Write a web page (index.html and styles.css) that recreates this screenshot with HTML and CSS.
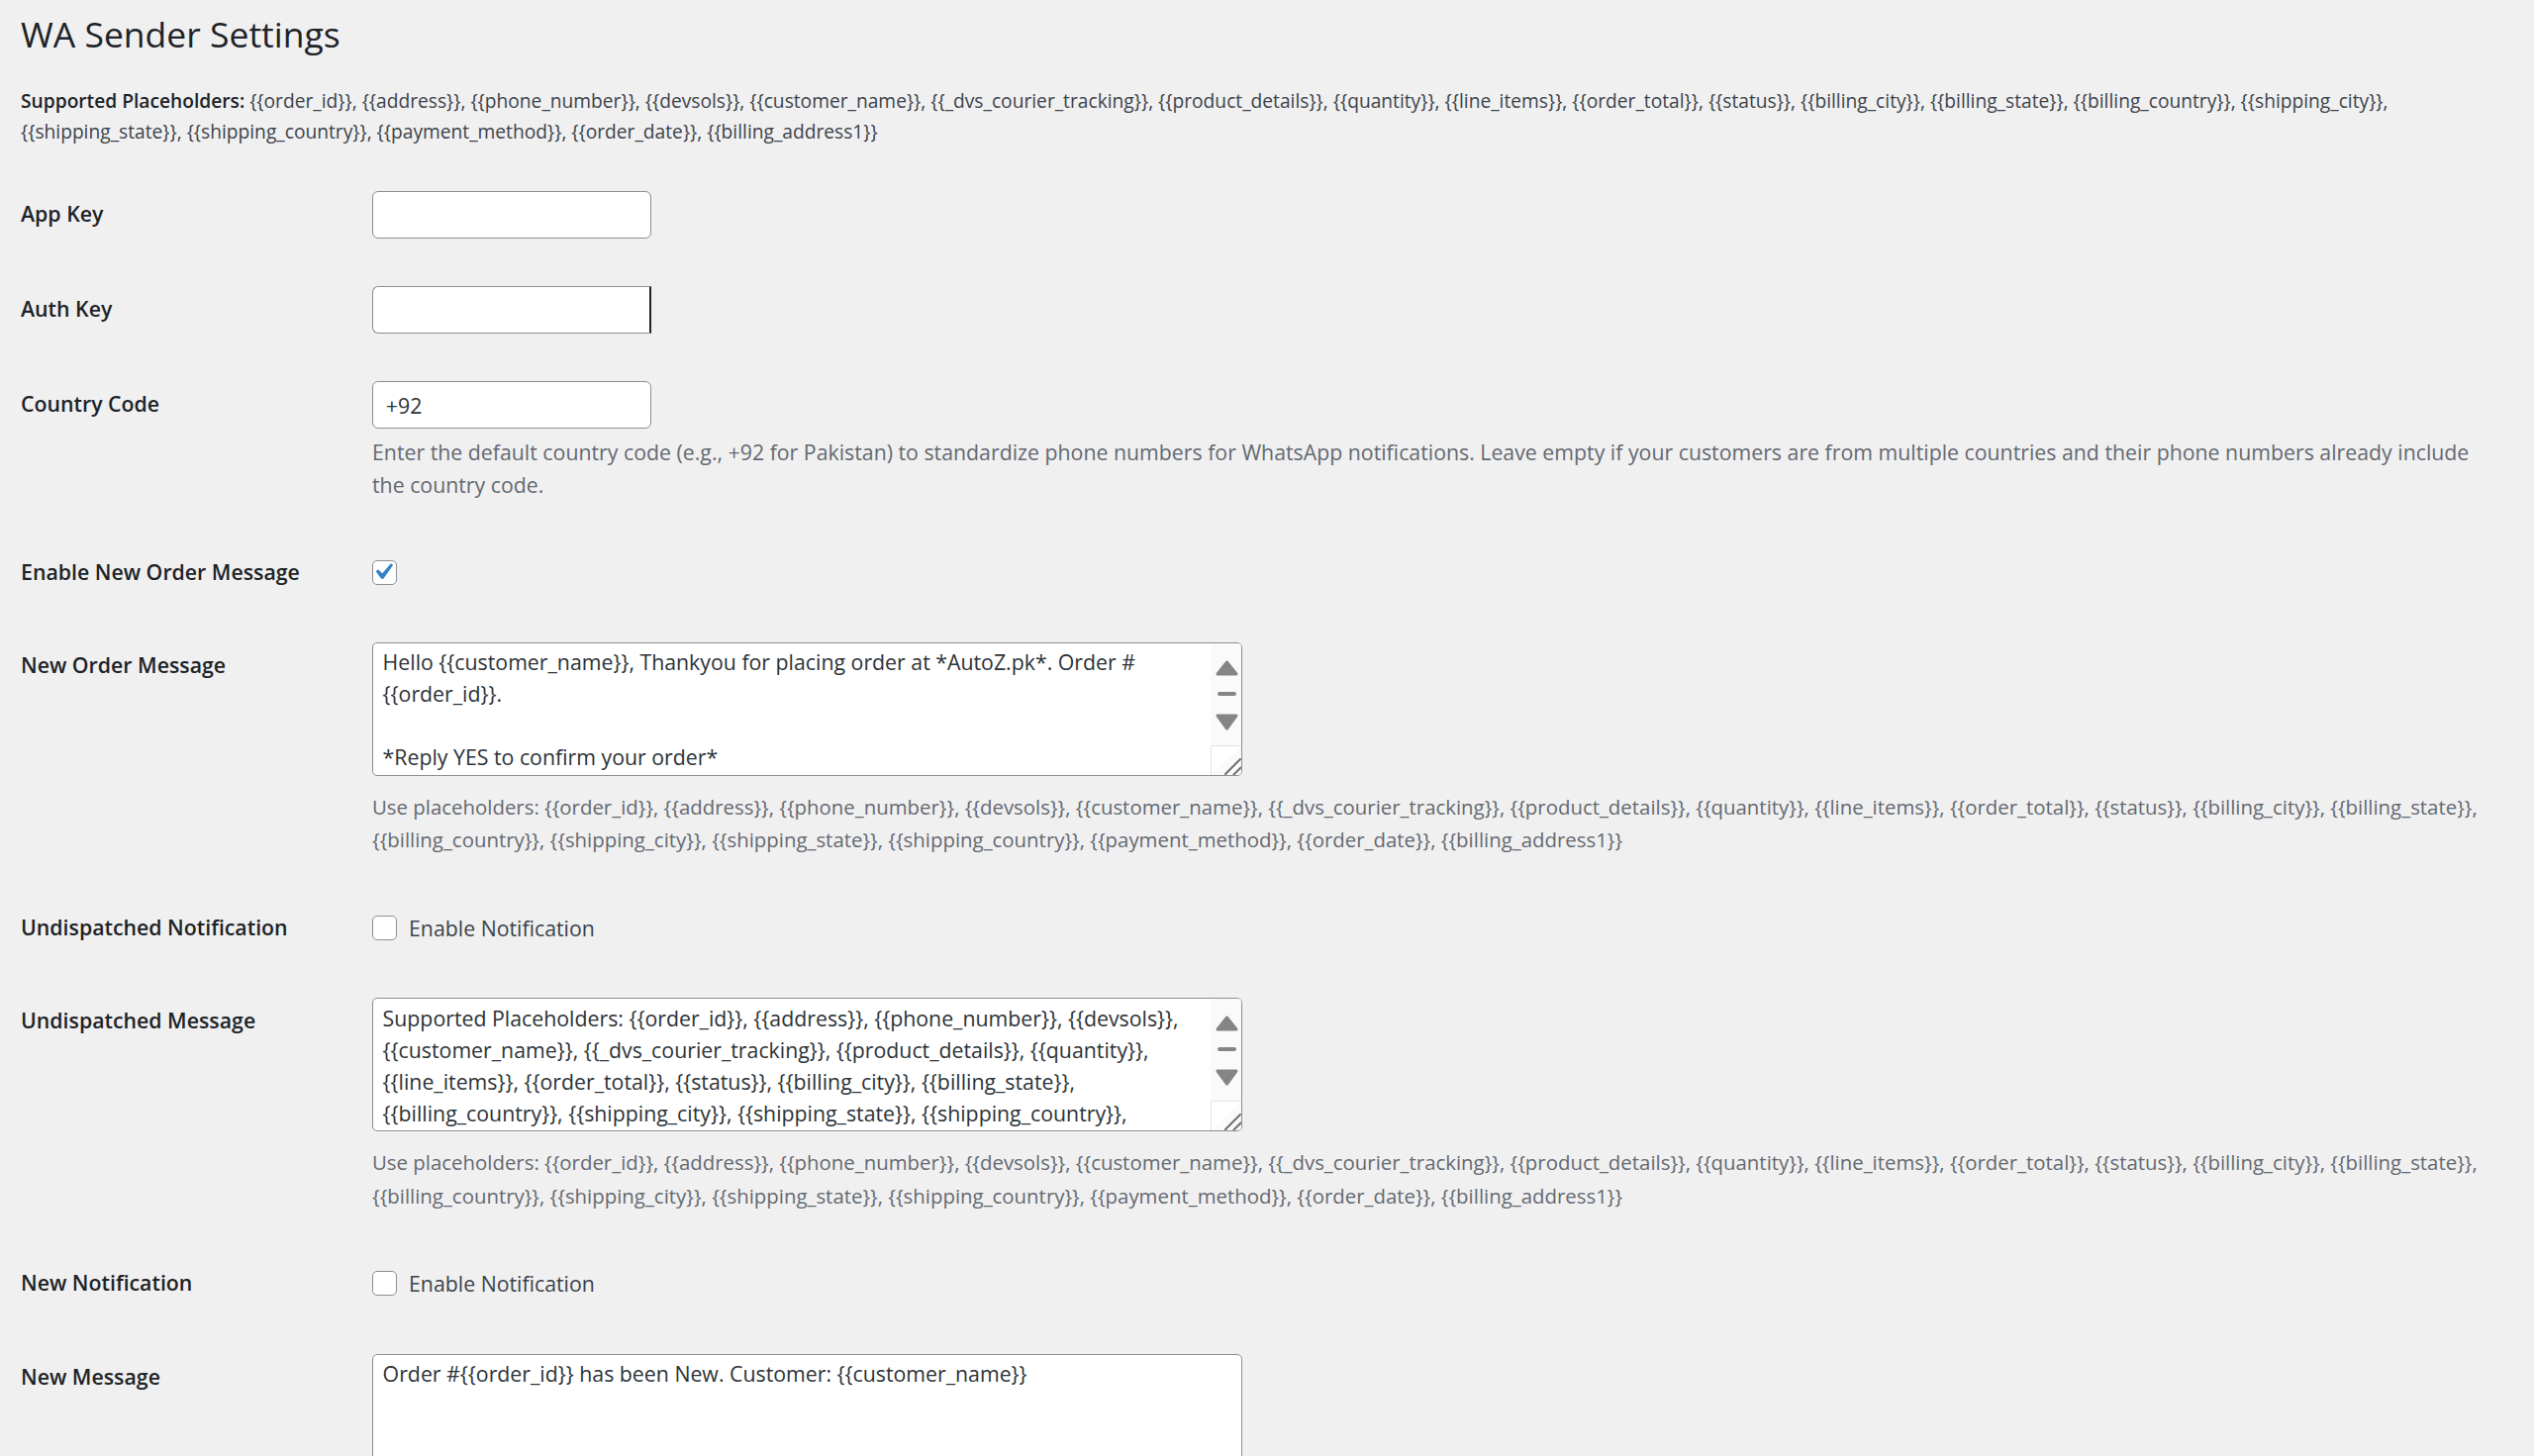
FILE: index.html
```html
<!DOCTYPE html>
<html lang="en">
<head>
    <meta charset="UTF-8">
    <title>WA Sender Settings</title>
    <link rel="stylesheet" href="styles.css">
</head>
<body>
<div class="wrap">
    <h1>WA Sender Settings</h1>
    <p class="placeholders"><strong>Supported Placeholders:</strong> {{order_id}}, {{address}}, {{phone_number}}, {{devsols}}, {{customer_name}}, {{_dvs_courier_tracking}}, {{product_details}}, {{quantity}}, {{line_items}}, {{order_total}}, {{status}}, {{billing_city}}, {{billing_state}}, {{billing_country}}, {{shipping_city}}, {{shipping_state}}, {{shipping_country}}, {{payment_method}}, {{order_date}}, {{billing_address1}}</p>

    <form method="post" action="options.php">
        <div class="form-table">
            <div class="form-row">
                <label class="row-title" for="app_key">App Key</label>
                <div class="row-field">
                    <input type="text" id="app_key" class="key-input">
                </div>
            </div>
            <div class="form-row">
                <label class="row-title" for="auth_key">Auth Key</label>
                <div class="row-field">
                    <input type="text" id="auth_key" class="key-input caret">
                </div>
            </div>
            <div class="form-row">
                <label class="row-title" for="country_code">Country Code</label>
                <div class="row-field">
                    <input type="text" id="country_code" class="key-input" value="+92">
                    <p class="description">Enter the default country code (e.g., +92 for Pakistan) to standardize phone numbers for WhatsApp notifications. Leave empty if your customers are from multiple countries and their phone numbers already include the country code.</p>
                </div>
            </div>
            <div class="form-row">
                <label class="row-title" for="new_order_enabled">Enable New Order Message</label>
                <div class="row-field">
                    <div class="check-field">
                        <span class="checkbox">
                            <input type="checkbox" id="new_order_enabled" checked>
                            <svg class="checkmark" viewBox="0 0 20 20"><path d="M14.83 4.89l1.34.94-5.81 8.38H9.02L5.78 9.67l1.34-1.25 2.57 2.4z"/></svg>
                        </span>
                    </div>
                </div>
            </div>
            <div class="form-row">
                <label class="row-title" for="new_order_message">New Order Message</label>
                <div class="row-field">
                    <div class="textarea-box">
                        <textarea id="new_order_message" rows="4">Hello {{customer_name}}, Thankyou for placing order at *AutoZ.pk*. Order # {{order_id}}.

*Reply YES to confirm your order*</textarea>
                        <div class="scrollbar">
                            <svg width="31" height="133" viewBox="0 0 31 133">
                                <path class="arrow" d="M16.5 19 L26 31 L7 31 Z"/>
                                <rect class="thumb" x="7" y="49" width="19" height="4" rx="2"/>
                                <path class="arrow" d="M7 73 L26 73 L16.5 86 Z"/>
                                <path class="corner" d="M0.5 133 V103.5 H31"/>
                                <path class="grip" d="M15 132 L30 117 M23.5 132.5 L30.5 125.5"/>
                            </svg>
                        </div>
                    </div>
                    <p class="description placeholder-list">Use placeholders: {{order_id}}, {{address}}, {{phone_number}}, {{devsols}}, {{customer_name}}, {{_dvs_courier_tracking}}, {{product_details}}, {{quantity}}, {{line_items}}, {{order_total}}, {{status}}, {{billing_city}}, {{billing_state}}, {{billing_country}}, {{shipping_city}}, {{shipping_state}}, {{shipping_country}}, {{payment_method}}, {{order_date}}, {{billing_address1}}</p>
                </div>
            </div>
            <div class="form-row">
                <span class="row-title">Undispatched Notification</span>
                <div class="row-field">
                    <label class="check-field">
                        <span class="checkbox"><input type="checkbox" name="undispatched_enabled"></span>
                        Enable Notification
                    </label>
                </div>
            </div>
            <div class="form-row">
                <label class="row-title" for="undispatched_message">Undispatched Message</label>
                <div class="row-field">
                    <div class="textarea-box">
                        <textarea id="undispatched_message" rows="4">Supported Placeholders: {{order_id}}, {{address}}, {{phone_number}}, {{devsols}}, {{customer_name}}, {{_dvs_courier_tracking}}, {{product_details}}, {{quantity}}, {{line_items}}, {{order_total}}, {{status}}, {{billing_city}}, {{billing_state}}, {{billing_country}}, {{shipping_city}}, {{shipping_state}}, {{shipping_country}}, {{payment_method}}, {{order_date}}, {{billing_address1}}</textarea>
                        <div class="scrollbar">
                            <svg width="31" height="133" viewBox="0 0 31 133">
                                <path class="arrow" d="M16.5 19 L26 31 L7 31 Z"/>
                                <rect class="thumb" x="7" y="49" width="19" height="4" rx="2"/>
                                <path class="arrow" d="M7 73 L26 73 L16.5 86 Z"/>
                                <path class="corner" d="M0.5 133 V103.5 H31"/>
                                <path class="grip" d="M15 132 L30 117 M23.5 132.5 L30.5 125.5"/>
                            </svg>
                        </div>
                    </div>
                    <p class="description placeholder-list">Use placeholders: {{order_id}}, {{address}}, {{phone_number}}, {{devsols}}, {{customer_name}}, {{_dvs_courier_tracking}}, {{product_details}}, {{quantity}}, {{line_items}}, {{order_total}}, {{status}}, {{billing_city}}, {{billing_state}}, {{billing_country}}, {{shipping_city}}, {{shipping_state}}, {{shipping_country}}, {{payment_method}}, {{order_date}}, {{billing_address1}}</p>
                </div>
            </div>
            <div class="form-row">
                <span class="row-title">New Notification</span>
                <div class="row-field">
                    <label class="check-field">
                        <span class="checkbox"><input type="checkbox" name="new_enabled"></span>
                        Enable Notification
                    </label>
                </div>
            </div>
            <div class="form-row">
                <label class="row-title" for="new_message">New Message</label>
                <div class="row-field">
                    <textarea id="new_message" class="message-input" rows="5">Order #{{order_id}} has been New. Customer: {{customer_name}}</textarea>
                </div>
            </div>
        </div>
        <p class="submit"><button type="submit" class="button-primary">Save Changes</button></p>
    </form>
</div>
</body>
</html>
```

FILE: styles.css
```css
* {
    box-sizing: border-box;
}

body {
    margin: 0;
    background: #f0f0f1;
    color: #3c434a;
    font-family: "Open Sans", "Noto Sans", sans-serif;
    font-size: 19.8px;
    line-height: 31.2px;
}

.wrap {
    padding: 11px 35px 40px 21px;
}

.wrap h1 {
    margin: 0;
    padding: 0 0 6.4px;
    font-size: 35.5px;
    font-weight: 400;
    line-height: 47.8px;
    color: #1d2327;
}

.placeholders {
    margin: 20.8px 0;
    font-size: 19.2px;
}

.placeholders strong {
    font-weight: 600;
    color: #1d2327;
}

.form-row {
    display: grid;
    grid-template-columns: 355px 1fr;
}

.row-title {
    padding-top: 32px;
    font-size: 21.3px;
    font-weight: 600;
    line-height: 29px;
    color: #1d2327;
}

.row-field {
    min-width: 0;
    padding: 24px 0;
}

.key-input {
    display: block;
    width: 282px;
    height: 48px;
    padding: 0 12.8px;
    border: 1px solid #8c8f94;
    border-radius: 6px;
    background: #fff;
    font-family: inherit;
    font-size: 21.3px;
    color: #2c3338;
}

.key-input.caret {
    border-right: 2px solid #1d2327;
    border-radius: 6px 0 0 6px;
}

.description {
    margin: 6.4px 0 0;
    font-size: 21.3px;
    line-height: 33.6px;
    color: #646970;
}

.description.placeholder-list {
    font-size: 20.4px;
}

.check-field {
    display: flex;
    align-items: center;
    gap: 12px;
    height: 46.5px;
    font-size: 21.3px;
    color: #3c434a;
}

.checkbox {
    position: relative;
    width: 25px;
    height: 25px;
    flex: none;
}

.checkbox input {
    display: block;
    width: 25px;
    height: 25px;
    margin: 0;
    border: 1px solid #8c8f94;
    border-radius: 5px;
    background: #fff;
    appearance: none;
    -webkit-appearance: none;
}

.checkmark {
    position: absolute;
    left: -5.6px;
    top: -4.3px;
    width: 33.6px;
    height: 33.6px;
    fill: #3582c4;
}

.textarea-box {
    position: relative;
    width: 879px;
    height: 135px;
    margin-bottom: 14.5px;
    border: 1px solid #8c8f94;
    border-radius: 5px;
    background: #fff;
    overflow: hidden;
}

.textarea-box textarea {
    display: block;
    width: calc(100% - 31px);
    height: 100%;
    padding: 3.2px 9.6px;
    border: 0;
    background: transparent;
    font-family: inherit;
    font-size: 21.3px;
    line-height: 32px;
    color: #2c3338;
    resize: none;
    overflow: hidden;
}

.scrollbar {
    position: absolute;
    top: 0;
    right: 0;
    width: 31px;
    height: 133px;
    background: #fafafa;
}

.scrollbar svg {
    display: block;
}

.scrollbar .arrow {
    fill: #858585;
    stroke: #858585;
    stroke-width: 3;
    stroke-linejoin: round;
}

.scrollbar .thumb {
    fill: #858585;
}

.scrollbar .corner {
    fill: #fff;
    stroke: #e3e3e3;
    stroke-width: 1;
}

.scrollbar .grip {
    fill: none;
    stroke: #6f6f6f;
    stroke-width: 2;
    stroke-linecap: round;
}

.message-input {
    display: block;
    width: 879px;
    height: 168px;
    padding: 3.2px 9.6px;
    border: 1px solid #8c8f94;
    border-radius: 5px;
    background: #fff;
    font-family: inherit;
    font-size: 21.3px;
    line-height: 32px;
    color: #2c3338;
    resize: vertical;
}

.submit {
    margin: 16px 0 0;
}

.button-primary {
    padding: 0 16px;
    height: 48px;
    border: 1px solid #2271b1;
    border-radius: 5px;
    background: #2271b1;
    color: #fff;
    font-family: inherit;
    font-size: 21.3px;
}
```
